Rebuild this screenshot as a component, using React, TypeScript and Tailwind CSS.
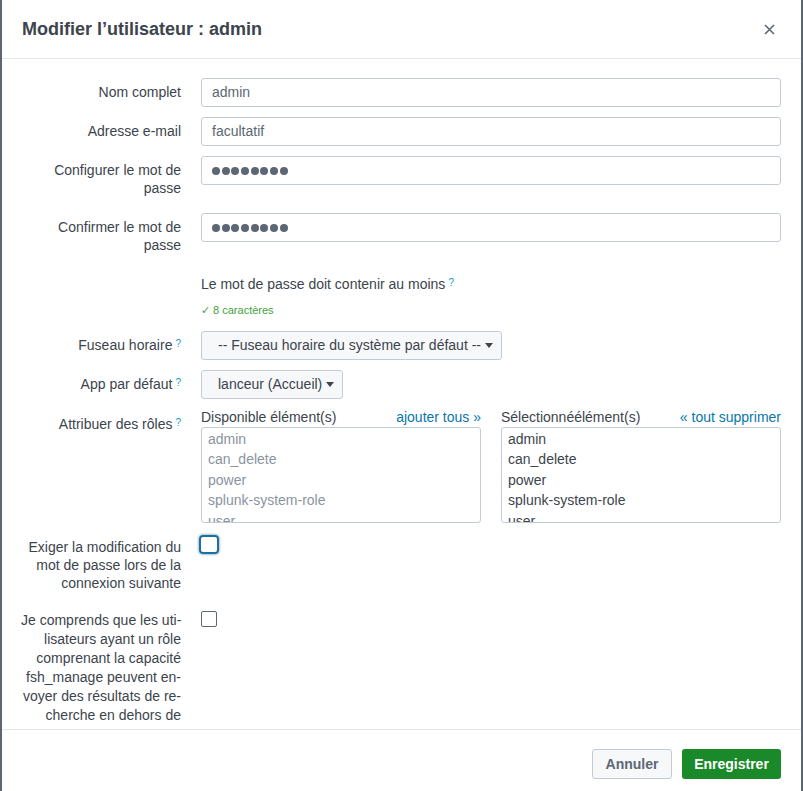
import React from "react";

const font = { fontFamily: '"Liberation Sans", Arial, sans-serif' };

const Help = () => (
  <sup className="ml-[3px] text-[10px] text-[#1a9cd0] relative -top-[3px]">?</sup>
);

const Row = ({
  label,
  children,
  className = "",
}: {
  label: React.ReactNode;
  children?: React.ReactNode;
  className?: string;
}) => (
  <div className={`flex gap-5 ${className}`}>
    <div className="w-[160px] shrink-0 text-right text-[14px] leading-[18px] text-[#3c444d] pt-[5px]">
      {label}
    </div>
    <div className="flex-1 min-w-0">{children}</div>
  </div>
);

const TextBox = ({ value, dots }: { value: string; dots?: boolean }) => (
  <div className="h-[29px] w-full rounded-[3px] border border-[#c3cbd4] bg-white px-[10px] flex items-center text-[14px] text-[#5c6773]">
    {dots ? (
      <span className="flex gap-[1.7px]">
        {Array.from({ length: 8 }).map((_, i) => (
          <span key={i} className="h-[8px] w-[8px] rounded-full bg-[#5c6773]" />
        ))}
      </span>
    ) : (
      value
    )}
  </div>
);

const Dropdown = ({ label }: { label: string }) => (
  <button className="h-[29px] rounded-[3px] border border-[#c3cbd4] bg-[#f7f8fa] pl-[16px] pr-[8px] flex items-center gap-[4px] text-[14px] text-[#3c444d]">
    {label}
    <svg width="8" height="5" viewBox="0 0 8 5">
      <path d="M0 0h8L4 5z" fill="#3c444d" />
    </svg>
  </button>
);

const roles = ["admin", "can_delete", "power", "splunk-system-role", "user"];

const RoleList = ({
  title,
  action,
  muted,
}: {
  title: string;
  action: string;
  muted?: boolean;
}) => (
  <div className="flex-1 min-w-0">
    <div className="flex justify-between text-[14px] leading-[18px] mb-px">
      <span className="text-[#3c444d]">{title}</span>
      <a className="text-[#0877a6]" href="#">
        {action}
      </a>
    </div>
    <div className="h-[96px] overflow-hidden rounded-[3px] border border-[#c3cbd4] px-[6px] pt-[1px]">
      {roles.map((r) => (
        <div
          key={r}
          className={`text-[14px] leading-[20.6px] ${muted ? "text-[#8a949e]" : "text-[#3c444d]"}`}
        >
          {r}
        </div>
      ))}
    </div>
  </div>
);

export default function App() {
  return (
    <div className="h-[791px] w-full bg-[#5f6670] px-[2px]" style={font}>
      <div className="flex h-full flex-col bg-white">
        <header className="flex h-[59px] shrink-0 items-center justify-between border-b border-[#e1e6eb] pl-[20px] pr-[26px]">
          <h1 className="text-[18px] font-bold text-[#3c444d]">Modifier l’utilisateur : admin</h1>
          <svg width="11" height="11" viewBox="0 0 11 11">
            <path d="M1 1l9 9M10 1l-9 9" stroke="#5c6773" strokeWidth="1.6" />
          </svg>
        </header>

        <main className="flex-1 overflow-hidden pt-[19px] pl-[19px] pr-[20px]">
          <Row label="Nom complet" className="mb-[10px]">
            <TextBox value="admin" />
          </Row>
          <Row label="Adresse e-mail" className="mb-[10px]">
            <TextBox value="facultatif" />
          </Row>
          <Row label="Configurer le mot de passe" className="mb-[15px] min-h-[42px]">
            <TextBox value="" dots />
          </Row>
          <Row label="Confirmer le mot de passe" className="mb-[25px] min-h-[42px]">
            <TextBox value="" dots />
          </Row>

          <Row label="" className="mb-[12px]">
            <div className="text-[14px] leading-[18px] text-[#3c444d] -mt-[5px]">
              Le mot de passe doit contenir au moins
              <Help />
            </div>
            <div className="mt-[9px] text-[11px] text-[#41a33a]">✓ 8 caractères</div>
          </Row>

          <Row
            label={
              <>
                Fuseau horaire
                <Help />
              </>
            }
            className="mb-[10px]"
          >
            <Dropdown label="-- Fuseau horaire du système par défaut --" />
          </Row>
          <Row
            label={
              <>
                App par défaut
                <Help />
              </>
            }
            className="mb-[11px]"
          >
            <Dropdown label="lanceur (Accueil)" />
          </Row>

          <Row
            label={
              <>
                Attribuer des rôles
                <Help />
              </>
            }
            className="mb-[12px]"
          >
            <div className="flex gap-[20px] -mt-[2px]">
              <RoleList title="Disponible élément(s)" action="ajouter tous »" muted />
              <RoleList title="Sélectionnéélément(s)" action="« tout supprimer" />
            </div>
          </Row>

          <Row
            label={
              <span className="block whitespace-nowrap leading-[18.3px] -mt-[2px]">
                Exiger la modification du
                <br />
                mot de passe lors de la
                <br />
                connexion suivante
              </span>
            }
            className="mb-[14px]"
          >
            <div className="ml-[-2px] h-[19px] w-[20px] rounded-[4px] border-2 border-[#1f6fa0] shadow-[0_0_2px_1px_rgba(31,111,160,0.4)]" />
          </Row>

          <Row
            label={
              <span className="block whitespace-nowrap leading-[19px]">
                Je comprends que les uti-
                <br />
                lisateurs ayant un rôle
                <br />
                comprenant la capacité
                <br />
                fsh_manage peuvent en-
                <br />
                voyer des résultats de re-
                <br />
                cherche en dehors de
              </span>
            }
          >
            <div className="mt-[5px] h-[16px] w-[16px] rounded-[2px] border border-[#5c6773]" />
          </Row>
        </main>

        <footer className="flex h-[62px] shrink-0 items-start justify-end gap-[10px] border-t border-[#e1e6eb] pt-[19px] pr-[20px]">
          <button className="h-[30px] w-[80px] rounded-[3px] border border-[#c3cbd4] bg-[#f7f8fa] text-[14px] font-bold text-[#5c6773]">
            Annuler
          </button>
          <button className="h-[30px] w-[99px] rounded-[3px] bg-[#1a8929] text-[14px] font-bold text-white">
            Enregistrer
          </button>
        </footer>
      </div>
    </div>
  );
}
